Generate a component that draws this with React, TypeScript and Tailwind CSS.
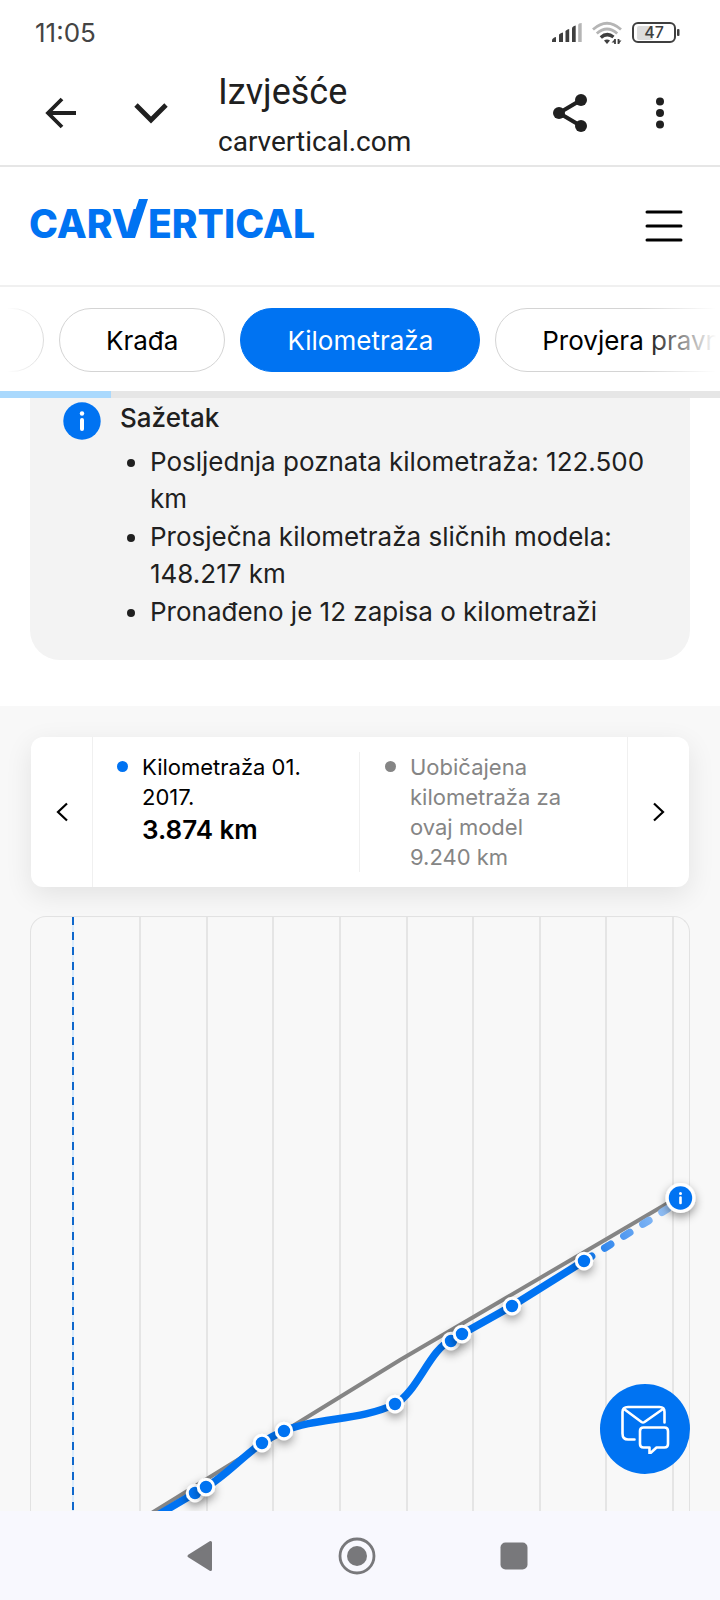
import clsx from 'clsx';

const TABS = [
  { label: 'Krađa', active: false },
  { label: 'Kilometraža', active: true },
  { label: 'Provjera pravnog statusa', active: false },
];

const SUMMARY = [
  'Posljednja poznata kilometraža: 122.500 km',
  'Prosječna kilometraža sličnih modela: 148.217 km',
  'Pronađeno je 12 zapisa o kilometraži',
];

const GRID_LINES = [109, 176, 242, 309, 376, 442, 509, 575, 642];

const POINTS = [
  [164, 576],
  [175, 570],
  [231, 526],
  [253, 514],
  [364, 487],
  [420, 424],
  [431, 417],
  [481, 389],
  [553, 344],
];

function StatusBar() {
  return (
    <div className="flex h-[66px] shrink-0 items-center justify-between pl-[35px] pr-10 text-[#444444]">
      <span className="text-[26px] leading-8">11:05</span>
      <div className="flex items-center gap-[10px]">
        <svg width="30" height="20" viewBox="0 0 30 20" fill="#3f3f3f">
          <path d="M0 19v-1.500q0-2.500 4-3.500v5z" />
          <path d="M7 19v-7q0-1.500 4-2.500v9.500z" />
          <path d="M13.500 19V8.500q0-1.500 3.700-2.500v13z" />
          <path d="M20 19V5.500q0-2 3.700-3v16.500z" />
          <path d="M26.200 19V2q0-2 3.500-2v19z" fill="#b5b5b5" />
        </svg>
        <svg width="30" height="24" viewBox="0 0 30 24" fill="none" strokeWidth="2.800">
          <path d="M1 8.500Q15-4 29 8.500" stroke="#b5b5b5" />
          <path d="M4.800 12.500Q15 3.500 25.200 12.500" stroke="#b5b5b5" />
          <path d="M8.800 16.500Q15 11 21.500 16" stroke="#3f3f3f" strokeWidth="3.400" />
          <path d="M12 19.500q3-2 6 0l-3 3.500z" fill="#3f3f3f" />
          <path d="M23 18v5M26.500 18v5" stroke="#3f3f3f" strokeWidth="1.800" />
          <path d="M23 18l-3.500 3.500H23zM26.500 23l3-3.500h-3z" fill="#3f3f3f" />
        </svg>
        <svg width="48" height="22" viewBox="0 0 48 22">
          <rect x="5" y="4" width="16" height="14" rx="2" fill="#dcdcdc" />
          <rect x="1" y="1" width="42" height="19" rx="5" fill="none" stroke="#3f3f3f" strokeWidth="2" />
          <rect x="45" y="7" width="2.500" height="7" rx="1" fill="#3f3f3f" />
          <text x="22" y="16" textAnchor="middle" fontSize="16" fontWeight="500" fill="#3f3f3f">47</text>
        </svg>
      </div>
    </div>
  );
}

function BrowserBar() {
  return (
    <div className="flex h-[101px] shrink-0 border-b-2 border-[#e6e6e6] text-[#202020]">
      <button aria-label="Natrag" className="flex h-[93px] w-[122px] items-center justify-center">
        <svg width="32" height="32" viewBox="0 0 32 32" fill="none" stroke="currentColor" strokeWidth="3.800">
          <path d="M31 16H4M17 2L3 16l14 14" />
        </svg>
      </button>
      <button aria-label="Smanji" className="flex h-[93px] w-[58px] items-center justify-center">
        <svg width="34" height="22" viewBox="0 0 34 22" fill="none" stroke="currentColor" strokeWidth="4.800">
          <path d="M2 3l15 15L32 3" />
        </svg>
      </button>
      <div className="ml-[38px] flex-1 font-[Roboto,sans-serif]">
        <p className="mt-1 text-[36px] leading-[44px]">Izvješće</p>
        <p className="mt-3 text-[28px] leading-8">carvertical.com</p>
      </div>
      <button aria-label="Podijeli" className="flex h-[93px] w-[90px] items-center justify-center">
        <svg width="36" height="40" viewBox="0 0 36 40" fill="currentColor">
          <path d="M29 7L7 20l22 13" fill="none" stroke="currentColor" strokeWidth="4" />
          <circle cx="29" cy="7" r="6" />
          <circle cx="7" cy="20" r="6" />
          <circle cx="29" cy="33" r="6" />
        </svg>
      </button>
      <button aria-label="Više" className="mr-[15px] flex h-[93px] w-[90px] items-center justify-center">
        <svg width="8" height="32" viewBox="0 0 8 32" fill="currentColor">
          <circle cx="4" cy="4.500" r="4" />
          <circle cx="4" cy="16" r="4" />
          <circle cx="4" cy="27.500" r="4" />
        </svg>
      </button>
    </div>
  );
}

function SiteHeader() {
  return (
    <header className="flex h-[120px] shrink-0 items-center justify-between border-b-2 border-[#f0f0f0] pl-[30px] pr-8">
      <a href="#" aria-label="carVertical">
        <svg className="overflow-visible" width="300" height="54" viewBox="0 0 300 54" fill="#0073f2" fontSize="39" fontWeight="800">
          <text x="-1" y="39">CARV</text>
          <text x="118" y="39">ERTICAL</text>
          <path d="M109 0h9L105 39h-9z" />
        </svg>
      </a>
      <button aria-label="Izbornik" className="flex h-12 w-12 items-center justify-center">
        <svg width="38" height="32" viewBox="0 0 38 32" fill="none" stroke="#000" strokeWidth="3" strokeLinecap="round">
          <path d="M2 2h34M2 16h34M2 30h34" />
        </svg>
      </button>
    </header>
  );
}

function Tabs() {
  return (
    <nav className="relative shrink-0 overflow-hidden">
      <div className="flex gap-[15px] pb-[19px] pt-[21px]">
        <button aria-label="Prethodno" className="-ml-[76px] h-16 w-[120px] shrink-0 rounded-full border border-[#d9d9d9]" />
        {TABS.map((tab) => (
          <button
            key={tab.label}
            className={clsx(
              'h-16 shrink-0 whitespace-nowrap rounded-full border px-[46px] text-[26px]',
              tab.active ? 'border-[#0073f2] bg-[#0073f2] text-white' : 'border-[#d4d4d4] bg-white text-black',
            )}
          >
            {tab.label}
          </button>
        ))}
      </div>
      <div className="absolute left-0 top-0 h-[104px] w-12 bg-linear-to-r from-white from-15% to-transparent" />
      <div className="absolute right-0 top-0 h-[104px] w-20 bg-linear-to-l from-white from-5% to-transparent" />
      <div className="h-[7px] bg-[#e6e6e6]">
        <div className="h-full w-[111px] bg-[#aad9fd]" />
      </div>
    </nav>
  );
}

function Summary() {
  return (
    <section className="mx-[30px] flex gap-[19px] rounded-b-[30px] bg-[#f3f3f3] px-[33px] pb-[30px] pt-px text-[26px] leading-[37px] text-[#202020]">
      <svg className="mt-[3px] shrink-0" width="38" height="38" viewBox="0 0 38 38">
        <circle cx="19" cy="19" r="18.700" fill="#0073f2" />
        <path d="M19 18v9" stroke="#fff" strokeWidth="4" strokeLinecap="round" />
        <circle cx="19" cy="11.500" r="2.200" fill="#fff" />
      </svg>
      <div>
        <h2 className="font-medium">Sažetak</h2>
        <ul className="mt-[7px] list-disc space-y-px pl-[30px]">
          {SUMMARY.map((item) => (
            <li key={item}>{item}</li>
          ))}
        </ul>
      </div>
    </section>
  );
}

function MileageCard() {
  return (
    <div className="mx-[31px] flex rounded-xl bg-white shadow-[0_8px_28px_rgba(0,0,0,0.09)]">
      <button aria-label="Prethodni zapis" className="flex w-[62px] items-center justify-center border-r border-[#f0f0f0]">
        <svg width="12" height="20" viewBox="0 0 12 20" fill="none" stroke="#000" strokeWidth="2.200">
          <path d="M11 1.500L2 10l9 8.500" />
        </svg>
      </button>
      <div className="my-[15px] grid flex-1 grid-cols-2 text-[22px] leading-[30px]">
        <div className="flex gap-[14px] border-r border-[#f0f0f0] pl-6 pr-5">
          <span className="mt-[9px] h-[11px] w-[11px] shrink-0 rounded-full bg-[#0073f2]" />
          <div>
            <p>Kilometraža 01. 2017.</p>
            <p className="text-[26px] font-semibold leading-9">3.874 km</p>
          </div>
        </div>
        <div className="flex gap-[14px] pl-[25px] pr-5 text-[#858585]">
          <span className="mt-[9px] h-[11px] w-[11px] shrink-0 rounded-full bg-[#858585]" />
          <div>
            <p>Uobičajena kilometraža za ovaj model</p>
            <p>9.240 km</p>
          </div>
        </div>
      </div>
      <button aria-label="Sljedeći zapis" className="flex w-[62px] items-center justify-center border-l border-[#f0f0f0]">
        <svg width="12" height="20" viewBox="0 0 12 20" fill="none" stroke="#000" strokeWidth="2.200">
          <path d="M1 1.500L10 10l-9 8.500" />
        </svg>
      </button>
    </div>
  );
}

function MileageChart() {
  return (
    <div className="mx-[30px] mt-[29px] rounded-t-2xl border border-b-0 border-[#e2e2e2]">
      <svg className="block h-auto w-full overflow-visible" viewBox="0 0 658 620">
        <defs>
          <linearGradient id="forecast" gradientUnits="userSpaceOnUse" x1="553" y1="344" x2="648" y2="284">
            <stop offset="0" stopColor="#0073f2" />
            <stop offset="0.250" stopColor="#3a8cee" />
            <stop offset="1" stopColor="#a9cdf8" />
          </linearGradient>
          <filter id="shadow" x="-100%" y="-100%" width="300%" height="300%">
            <feDropShadow dx="0" dy="4" stdDeviation="5" floodColor="#000" floodOpacity="0.400" />
          </filter>
        </defs>
        {GRID_LINES.map((x) => (
          <line key={x} x1={x} x2={x} y1="0" y2="620" stroke="#e5e5e5" strokeWidth="2" />
        ))}
        <line x1="42" x2="42" y1="0" y2="620" stroke="#d9ecfd" strokeWidth="2" />
        <line x1="42" x2="42" y1="0" y2="620" stroke="#0f68cc" strokeWidth="2" strokeDasharray="8 7" />
        <path d="M106 605L369 443L649 279" fill="none" stroke="#858585" strokeWidth="4" />
        <path
          d="M553 344L649 284"
          fill="none"
          stroke="url(#forecast)"
          strokeWidth="7.500"
          strokeLinecap="round"
          strokeDasharray="7 15.500"
          strokeDashoffset="-2"
        />
        <path
          d="M110 608L164 576L175 570C192 561 211 540 231 526C238 521 246 517 253 514C285 500 330 504 364 487C386 476 400 430 420 424L431 417L481 389L553 344"
          fill="none"
          stroke="#0073f2"
          strokeWidth="7.500"
        />
        {POINTS.map(([x, y]) => (
          <circle key={x} cx={x} cy={y} r="7.700" fill="#0073f2" stroke="#fff" strokeWidth="3" filter="url(#shadow)" />
        ))}
        <g filter="url(#shadow)">
          <circle cx="649.500" cy="281" r="15" fill="#fff" />
          <circle cx="649.500" cy="281" r="11.700" fill="#0073f2" />
          <path d="M649.500 280.500v5.500" stroke="#fff" strokeWidth="2.600" strokeLinecap="round" />
          <circle cx="649.500" cy="276.500" r="1.500" fill="#fff" />
        </g>
      </svg>
    </div>
  );
}

function SystemNav() {
  return (
    <div className="flex h-[89px] shrink-0 items-center justify-center gap-[124px] bg-[#f8f8fe] pr-[6px] text-[#78787b]">
      <button aria-label="Natrag">
        <svg width="28" height="32" viewBox="0 0 28 32" fill="currentColor" stroke="currentColor" strokeWidth="3" strokeLinejoin="round">
          <path d="M3 16L24.500 2.500v27z" />
        </svg>
      </button>
      <button aria-label="Početni zaslon">
        <svg width="38" height="38" viewBox="0 0 38 38" fill="none">
          <circle cx="19" cy="19" r="17" stroke="currentColor" strokeWidth="2.800" />
          <circle cx="19" cy="19" r="10" fill="currentColor" />
        </svg>
      </button>
      <button aria-label="Nedavne aplikacije">
        <svg width="28" height="28" viewBox="0 0 28 28" fill="currentColor">
          <rect x="0.500" y="0.500" width="27" height="27" rx="5" />
        </svg>
      </button>
    </div>
  );
}

export default function App() {
  return (
    <div className="flex h-screen flex-col bg-white font-[Inter,sans-serif]">
      <StatusBar />
      <BrowserBar />
      <SiteHeader />
      <Tabs />
      <div className="relative flex min-h-0 flex-1 flex-col">
        <main className="flex-1 overflow-hidden">
          <Summary />
          <section className="mt-[46px] bg-[#f8f8f8] pt-[31px]">
            <MileageCard />
            <MileageChart />
          </section>
        </main>
        <button
          aria-label="Pošalji poruku"
          className="absolute bottom-[37px] right-[30px] flex h-[90px] w-[90px] items-center justify-center rounded-full bg-[#0073f2]"
        >
          <svg width="50" height="50" viewBox="0 0 50 50" fill="none" stroke="#fff" strokeWidth="2.600" strokeLinecap="round" strokeLinejoin="round">
            <path d="M14.500 35.500H8q-5.500 0-5.500-6V8q0-5 5.500-5h31.500q5 0 5 5v10.500" />
            <path d="M4 5l17.500 13q1.500 1 3 0L43 5" />
            <path d="M23.500 23.500h21q3.500 0 3.500 3.500v13q0 3.500-3.500 3.500h-8L29.500 50v-6.500h-6q-3.500 0-3.500-3.500V27q0-3.500 3.500-3.500z" />
          </svg>
        </button>
      </div>
      <SystemNav />
    </div>
  );
}
